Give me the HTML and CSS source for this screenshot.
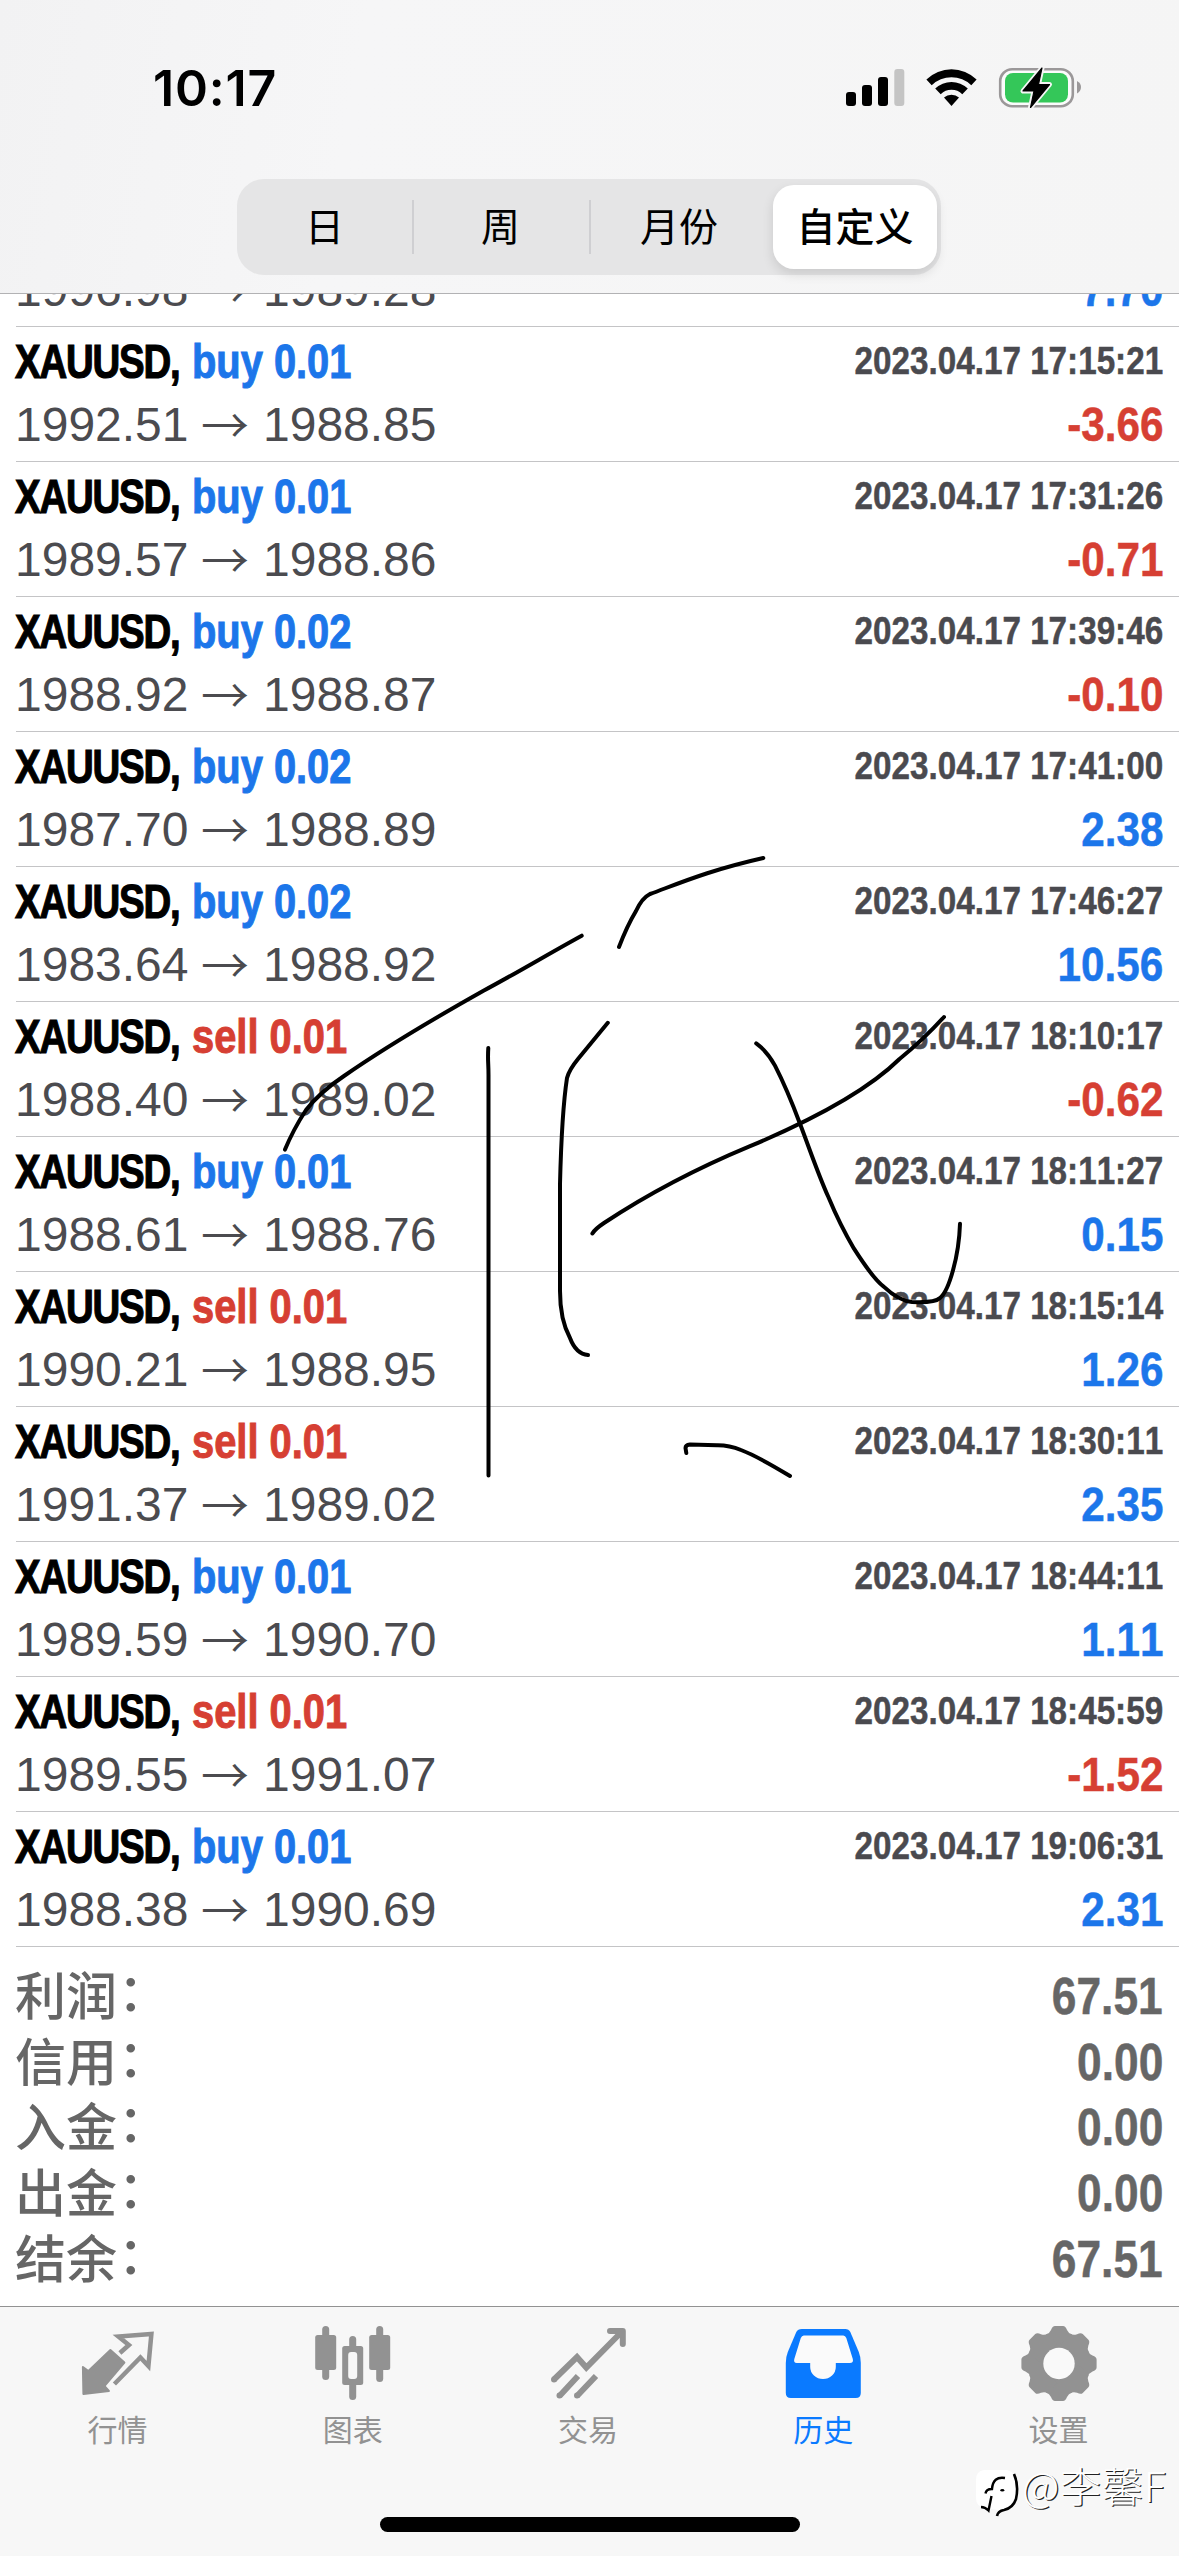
FILE: index.html
```
<!DOCTYPE html>
<html lang="zh-CN">
<head>
<meta charset="utf-8">
<title>历史</title>
<link rel="stylesheet" href="styles.css">
</head>
<body>
<div class="screen">
  <header class="header">
    <div class="status">
      <span class="clock">10:17</span>
      <svg class="status-icons" viewBox="840 60 250 56" width="250" height="56">
        <rect x="846" y="92" width="10" height="14" rx="3"/>
        <rect x="862" y="85" width="10" height="21" rx="3"/>
        <rect x="878" y="77" width="10" height="29" rx="3"/>
        <rect x="894.3" y="69" width="10" height="37" rx="3" fill="#c4c4c4"/>
        <path d="M926.4 79.5A36 36 0 0 1 976.6 79.5L971.3 85.2A28.5 28.5 0 0 0 931.7 85.2Z"/>
        <path d="M935.2 88.6A23.5 23.5 0 0 1 967.8 88.6L962.3 94.2A15.5 15.5 0 0 0 940.7 94.2Z"/>
        <path d="M944 97.6A11 11 0 0 1 959 97.6L951.5 106Z"/>
        <rect x="1000.2" y="69.2" width="72.6" height="37" rx="12" fill="#fff" fill-opacity=".6" stroke="#9b9899" stroke-width="2.6"/>
        <rect x="1005" y="73" width="63" height="29.5" rx="8" fill="#34c759"/>
        <path d="M1077 81Q1081 83 1081 87T1077 93.500Z" fill="#9b9899"/>
        <path d="M1042 68L1023 91H1034L1030.500 107.500L1049.500 84.500H1038.500Z" stroke="#f6f6f6" stroke-width="5" stroke-linejoin="round"/>
        <path d="M1042 68L1023 91H1034L1030.500 107.500L1049.500 84.500H1038.500Z" stroke="#000" stroke-width="1.200" stroke-linejoin="round"/>
      </svg>
    </div>
    <nav class="segments">
      <span class="segment">日</span>
      <span class="segment divided">周</span>
      <span class="segment divided">月份</span>
      <span class="segment selected">自定义</span>
    </nav>
  </header>

  <main class="list">
    <article class="deal clipped"><div class="line"><span class="price">1996.98</span><span class="arrow">→</span><span class="price">1989.28</span><b class="profit buy">7.70</b></div></article>
    <article class="deal"><div class="line"><span class="symbol">XAUUSD,</span><span class="side buy">buy 0.01</span><time>2023.04.17 17:15:21</time></div><div class="line"><span class="price">1992.51</span><span class="arrow">→</span><span class="price">1988.85</span><b class="profit sell">-3.66</b></div></article>
    <article class="deal"><div class="line"><span class="symbol">XAUUSD,</span><span class="side buy">buy 0.01</span><time>2023.04.17 17:31:26</time></div><div class="line"><span class="price">1989.57</span><span class="arrow">→</span><span class="price">1988.86</span><b class="profit sell">-0.71</b></div></article>
    <article class="deal"><div class="line"><span class="symbol">XAUUSD,</span><span class="side buy">buy 0.02</span><time>2023.04.17 17:39:46</time></div><div class="line"><span class="price">1988.92</span><span class="arrow">→</span><span class="price">1988.87</span><b class="profit sell">-0.10</b></div></article>
    <article class="deal"><div class="line"><span class="symbol">XAUUSD,</span><span class="side buy">buy 0.02</span><time>2023.04.17 17:41:00</time></div><div class="line"><span class="price">1987.70</span><span class="arrow">→</span><span class="price">1988.89</span><b class="profit buy">2.38</b></div></article>
    <article class="deal"><div class="line"><span class="symbol">XAUUSD,</span><span class="side buy">buy 0.02</span><time>2023.04.17 17:46:27</time></div><div class="line"><span class="price">1983.64</span><span class="arrow">→</span><span class="price">1988.92</span><b class="profit buy">10.56</b></div></article>
    <article class="deal"><div class="line"><span class="symbol">XAUUSD,</span><span class="side sell">sell 0.01</span><time>2023.04.17 18:10:17</time></div><div class="line"><span class="price">1988.40</span><span class="arrow">→</span><span class="price">1989.02</span><b class="profit sell">-0.62</b></div></article>
    <article class="deal"><div class="line"><span class="symbol">XAUUSD,</span><span class="side buy">buy 0.01</span><time>2023.04.17 18:11:27</time></div><div class="line"><span class="price">1988.61</span><span class="arrow">→</span><span class="price">1988.76</span><b class="profit buy">0.15</b></div></article>
    <article class="deal"><div class="line"><span class="symbol">XAUUSD,</span><span class="side sell">sell 0.01</span><time>2023.04.17 18:15:14</time></div><div class="line"><span class="price">1990.21</span><span class="arrow">→</span><span class="price">1988.95</span><b class="profit buy">1.26</b></div></article>
    <article class="deal"><div class="line"><span class="symbol">XAUUSD,</span><span class="side sell">sell 0.01</span><time>2023.04.17 18:30:11</time></div><div class="line"><span class="price">1991.37</span><span class="arrow">→</span><span class="price">1989.02</span><b class="profit buy">2.35</b></div></article>
    <article class="deal"><div class="line"><span class="symbol">XAUUSD,</span><span class="side buy">buy 0.01</span><time>2023.04.17 18:44:11</time></div><div class="line"><span class="price">1989.59</span><span class="arrow">→</span><span class="price">1990.70</span><b class="profit buy">1.11</b></div></article>
    <article class="deal"><div class="line"><span class="symbol">XAUUSD,</span><span class="side sell">sell 0.01</span><time>2023.04.17 18:45:59</time></div><div class="line"><span class="price">1989.55</span><span class="arrow">→</span><span class="price">1991.07</span><b class="profit sell">-1.52</b></div></article>
    <article class="deal"><div class="line"><span class="symbol">XAUUSD,</span><span class="side buy">buy 0.01</span><time>2023.04.17 19:06:31</time></div><div class="line"><span class="price">1988.38</span><span class="arrow">→</span><span class="price">1990.69</span><b class="profit buy">2.31</b></div></article>

    <section class="totals">
      <div class="total"><span>利润<i>：</i></span><b>67.51</b></div>
      <div class="total"><span>信用<i>：</i></span><b>0.00</b></div>
      <div class="total"><span>入金<i>：</i></span><b>0.00</b></div>
      <div class="total"><span>出金<i>：</i></span><b>0.00</b></div>
      <div class="total"><span>结余<i>：</i></span><b>67.51</b></div>
    </section>
  </main>

  <nav class="tabs">
    <a class="tab">
      <svg viewBox="77.600 2324 80 78" width="80" height="78">
        <path d="M110 2350L124 2362.500L104 2386L108.500 2391L83 2394L82.500 2367L88 2371Z" stroke="currentColor" stroke-width="2" stroke-linejoin="round"/>
        <path d="M119.500 2353L128.500 2345L118 2336.500L151 2334L148 2366L140 2357.500L114 2384" fill="none" stroke="currentColor" stroke-width="4.500"/>
      </svg>
      <span>行情</span>
    </a>
    <a class="tab">
      <svg viewBox="312.800 2324 80 78" width="80" height="78">
        <rect x="322" y="2326" width="7" height="54" rx="3.500"/><rect x="315" y="2335" width="21" height="35" rx="2.500"/>
        <rect x="349" y="2336" width="7" height="64" rx="3.500"/><rect x="342" y="2346" width="21" height="39" rx="2.500"/>
        <rect x="348" y="2352" width="9" height="27" rx="3" fill="#f7f7f7"/>
        <rect x="376" y="2326" width="7" height="56" rx="3.500"/><rect x="369" y="2335" width="21" height="35" rx="2.500"/>
      </svg>
      <span>图表</span>
    </a>
    <a class="tab">
      <svg viewBox="548 2324 80 78" width="80" height="78">
        <g fill="none" stroke="currentColor" stroke-width="6">
          <path d="M554 2379.500L577 2357L586.300 2367.500L622 2331.500M577 2396L596 2376M559.500 2396L578 2376"/>
          <path d="M610 2331H622.800V2344" stroke-linecap="round" stroke-linejoin="round"/>
        </g>
        <circle cx="554" cy="2379.500" r="3"/><circle cx="559.500" cy="2395.500" r="3"/><circle cx="577" cy="2395.500" r="3"/>
      </svg>
      <span>交易</span>
    </a>
    <a class="tab active">
      <svg viewBox="783.200 2324 80 78" width="80" height="78">
        <path d="M802 2329H845.500Q849 2329 850.500 2332L859 2352Q861 2357 861 2363V2393Q861 2398 856 2398H791Q786 2398 786 2393V2363Q786 2357 788 2352L796.500 2332Q798 2329 802 2329Z"/>
        <path d="M804 2335.500H843.500Q845.500 2335.500 846.500 2338L853 2359Q854 2363 850 2363H836V2367A12.800 12 0 0 1 810.400 2367V2363H797Q793.500 2363 794.500 2359L801 2338Q802 2335.500 804 2335.500Z" fill="#fafafa"/>
      </svg>
      <span>历史</span>
    </a>
    <a class="tab">
      <svg viewBox="-41 -39.500 80 78" width="80" height="78">
        <defs><path id="tooth" d="M-13 -29Q-9.500 -30 -8 -33.500Q-6.500 -37.600 -4 -37.600H4Q6.500 -37.600 8 -33.500Q9.500 -30 13 -29V-15H-13Z"/></defs>
        <circle r="29.500"/>
        <use href="#tooth"/><use href="#tooth" transform="rotate(45)"/><use href="#tooth" transform="rotate(90)"/><use href="#tooth" transform="rotate(135)"/>
        <use href="#tooth" transform="rotate(180)"/><use href="#tooth" transform="rotate(225)"/><use href="#tooth" transform="rotate(270)"/><use href="#tooth" transform="rotate(315)"/>
        <circle r="15.700" fill="#f9f9f9"/>
      </svg>
      <span>设置</span>
    </a>
  </nav>

  <!-- freehand pen strokes over the list -->
  <svg class="ink" viewBox="0 0 1179 2556" width="1179" height="2556">
    <path d="M581.700 935.700C550 953 515 974 483 991C435 1018 380 1051 344 1076Q320 1092 306 1110Q293 1130 285 1149.600"/>
    <path d="M488.300 1048C487.500 1060 488.500 1062 488.500 1075V1475.500"/>
    <path d="M607.800 1022.800L578 1059Q569 1070 567 1078C563 1104 561 1144 560 1184V1291C560 1312 564 1327 570 1338Q576 1354 588 1355"/>
    <path d="M619 947Q627 926 636 911Q642 898 650 894C680 883 710 870 763.300 858"/>
    <path d="M592.400 1233.500Q595 1229 604 1223C651 1192 700 1167 749.500 1146.400C810 1121 866 1092 899.500 1059Q923 1040 944 1017"/>
    <path d="M756.200 1043.300Q767 1051 775 1065.600Q787 1089 800 1123.700C810 1150 818 1174 828.500 1197.300Q840 1225 854 1248.700C867 1269 876 1281 883.700 1286.600Q899 1301 912 1302Q935 1303 940 1298C949 1291 959 1256 960 1223.700"/>
    <path d="M686.300 1453L685.500 1448Q685.500 1445 690 1444.500L717 1445.200Q729 1445 741 1450Q757 1456 790 1476"/>
  </svg>

  <div class="home-bar"></div>
  <div class="watermark">
    <svg viewBox="974 2466 46 54" width="46" height="54">
      <path d="M984 2470H1007Q1016 2472 1016 2482V2498Q1014 2508 1004 2510L997 2516L998 2510L984 2508Q976 2506 976 2498V2480Q976 2471 984 2470Z" fill="#fff"/>
      <path d="M1014 2474Q1019 2485 1016 2499Q1013 2508 1004 2510Q998 2511 997 2516" fill="none" stroke="#000" stroke-width="2.600"/>
      <path d="M1005 2478Q993 2476 992 2489Q986 2489 985.500 2493.500M991.500 2496L988.500 2510.500Q985 2507 981 2507" fill="none" stroke="#000" stroke-width="2.400"/>
      <ellipse cx="1002.300" cy="2490.300" rx="2" ry="1.200"/>
    </svg>
    <span>@李馨F</span>
  </div>
</div>
</body>
</html>
```
FILE: styles.css
```
* { box-sizing: border-box; }
body { margin: 0; background: #fff; font-family: "Liberation Sans", "Noto Sans CJK SC", sans-serif; }
.screen { position: relative; width: 1179px; height: 2556px; overflow: hidden; display: flex; flex-direction: column; }

.header { height: 294px; flex: none; background: linear-gradient(100deg, #f2f2f3, #f6f6f7 30%, #f5f5f5); border-bottom: 1px solid #b2b2b4; }
.status { height: 179px; padding: 60px 89px 0 153px; display: flex; justify-content: space-between; align-items: flex-start; }
.clock { font: 600 50px/56px Inter, sans-serif; letter-spacing: .8px; }
.segments { width: 704px; height: 96px; margin-left: 237px; padding: 6px 4px 6px 0; display: grid; grid-template-columns: 175px 177px 184px 164px; border-radius: 27px; background: #e5e5e6; }
.segment { display: flex; align-items: center; justify-content: center; position: relative; padding-bottom: 6px; font: 400 39px/78px "Noto Sans CJK SC", sans-serif; color: #000; }
.segment:nth-child(3) { padding-right: 4px; }
.divided::before { content: ""; position: absolute; left: 0; top: 15px; height: 54px; width: 2px; background: #cfcfd2; }
.selected { background: #fff; border-radius: 21px; font-weight: 500; box-shadow: 0 5px 12px rgba(0, 0, 0, .12); }

.list { height: 2012px; flex: none; overflow: hidden; }
.deal { height: 135px; margin-left: 16px; padding: 3px 16px 0 0; border-bottom: 1px solid #c4c4c6; }
.clipped { height: 69px; margin-top: -36px; padding-top: 0; }
.line { height: 63px; display: flex; font-size: 48px; line-height: 63px; white-space: nowrap; font-kerning: none; }
.symbol { width: 177px; margin-left: -1px; margin-right: 1px; font-weight: 700; letter-spacing: -1.5px; transform: scaleX(.8); transform-origin: left; -webkit-text-stroke: 1.2px; }
.side { margin-left: -1px; font-weight: 700; transform: scaleX(.83); transform-origin: left; -webkit-text-stroke: 1px; }
.line time { margin-left: auto; font-size: 39px; font-weight: 700; line-height: 61px; color: #4a4a4f; transform: scaleX(.852); transform-origin: right; -webkit-text-stroke: .5px; }
.price { width: 174px; margin-left: -1px; color: #4b4b4f; }
.arrow { width: 75px; margin-top: -2px; padding-right: 3px; text-align: center; color: #4b4b4f; font-family: "Noto Sans CJK SC", sans-serif; font-weight: 350; }
.profit { margin-left: auto; transform: scaleX(.88); transform-origin: right; -webkit-text-stroke: .5px; }
.buy { color: #1c76ea; }
.sell { color: #d63f33; }

.totals { padding: 14px 16px 0 15px; color: #666; }
.total { height: 65.7px; display: flex; justify-content: space-between; font-size: 51px; line-height: 65.7px; }
.total span { font-family: "Noto Sans CJK SC", sans-serif; font-weight: 500; }
.total i { font-style: normal; position: relative; top: -4px; left: 1px; }
.total b { padding-top: 3px; transform: scaleX(.868); transform-origin: right; -webkit-text-stroke: .5px; }

.tabs { height: 250px; flex: none; display: grid; grid-template-columns: repeat(5, 1fr); align-items: start; padding: 17px 3px 0 0; background: #f7f7f7; border-top: 1px solid #929292; }
.tab { display: flex; flex-direction: column; align-items: center; color: #929292; font: 400 30px/44px "Noto Sans CJK SC", sans-serif; }
.tab svg { fill: currentColor; }
.tab span { margin-top: 4px; }
.active { color: #0a7aff; }

.ink { position: absolute; left: 0; top: 0; fill: none; stroke: #000; stroke-width: 4; stroke-linecap: round; stroke-linejoin: round; }
.home-bar { position: absolute; left: 380px; top: 2517px; width: 420px; height: 15px; border-radius: 8px; background: #000; }
.watermark { position: absolute; left: 974px; top: 2466px; display: flex; align-items: flex-start; gap: 2px; color: #fff; font: 300 41px/46px "Noto Sans CJK SC", sans-serif; letter-spacing: .8px; text-shadow: 1.2px 1.2px .3px #222; white-space: nowrap; }
.watermark span { margin-top: -5px; }
```
